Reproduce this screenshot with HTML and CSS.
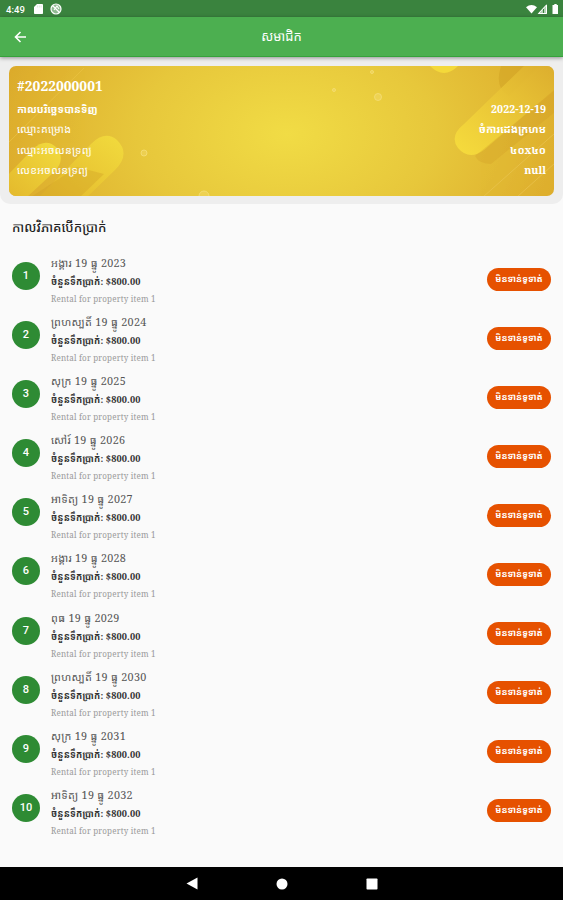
FILE: index.html
```html
<!DOCTYPE html>
<html lang="km">
<head>
<meta charset="utf-8">
<title>សមាជិក</title>
<link rel="stylesheet" href="styles.css">
</head>
<body>
<div class="status">
  <span class="clock">4:49</span>
  <svg class="sd" width="9" height="10" viewBox="0 0 9 10"><path d="M3 0h5.200q.8 0 .8.8v8.400q0 .8-.8.8H.8Q0 10 0 9.200V3z" fill="#fff"/><path d="M3.500 1.500v2M5.300 1.500v2M7.100 1.500v2" stroke="#c9dfca" stroke-width=".6"/></svg>
  <svg class="sync" width="12" height="12" viewBox="0 0 12 12"><circle cx="6" cy="6" r="5" fill="#8fba91" stroke="#fff" stroke-width="1.200"/><path d="M2.500 2.500l7 7M4 7l3-4 2 3" fill="none" stroke="#fff" stroke-width="1.200"/></svg>
  <svg class="signals" width="33" height="12" viewBox="0 0 33 12"><path d="M0 4.200Q5.500 0 11 4.200L5.500 10.500z" fill="#fff"/><path d="M21 1v10H11.500z" fill="#b8d3b9"/><path d="M20.500 2v8.500h-8z" fill="none" stroke="#fff"/><path d="M17.500 6v4" stroke="#3a833e"/><path d="M27 2h1.300V1h2.400v1H32v9h-5.500V2z" fill="#fff"/></svg>
</div>
<header class="appbar">
  <svg class="back" width="13" height="12" viewBox="0 0 13 12"><path d="M12 6H1.500M6.500 1L1.500 6l5 5" fill="none" stroke="#fff" stroke-width="1.600"/></svg>
  <h1>សមាជិក</h1>
</header>
<section class="panel">
  <div class="card">
    <svg class="art" width="546" height="131" viewBox="0 0 546 131">
      <defs>
        <radialGradient id="glow" gradientUnits="userSpaceOnUse" cx="0" cy="0" r="1" gradientTransform="translate(278 68) scale(300 190)"><stop offset="0" stop-color="#f1dc45"/><stop offset=".5" stop-color="#e7c73b"/><stop offset="1" stop-color="#dcaa2b"/></radialGradient>
        <linearGradient id="beam" x1="0" y1="1" x2="1" y2="0"><stop offset="0" stop-color="#e3b72b"/><stop offset="1" stop-color="#f4df3e"/></linearGradient>
        <linearGradient id="beam2" x1="0" y1="1" x2="1" y2="0"><stop offset="0" stop-color="#f8df3d"/><stop offset=".35" stop-color="#efcf39"/><stop offset="1" stop-color="#dcae2e"/></linearGradient>
      </defs>
      <rect width="546" height="131" fill="url(#glow)"/>
      <path d="M-10 118L24 83Q37 71 48 82Q57 94 45 106L18 131H-10z" fill="url(#beam)" opacity=".9"/>
      <path d="M37 124L82 78Q96 64 108 74Q122 88 106 104L78 131H30z" fill="url(#beam)" opacity=".85"/>
      <path d="M22 131l46-30 27 7-24 23z" fill="#cf9d24" opacity=".35"/>
      <path d="M0 76L75 2" stroke="#edc547" opacity=".6"/>
      <path d="M492 0Q485 22 500 30L530 0z" fill="#c9971e" opacity=".35"/>
      <path d="M515 0h31v23L475 84Q460 95 449 82Q440 70 455 58z" fill="url(#beam2)" opacity=".9"/>
      <path d="M546 24L466 90Q470 98 482 98L546 46z" fill="#c99320" opacity=".22"/>
      <path d="M474 131L546 67M508 131L546 97" stroke="#eac451" opacity=".7"/>
      <path d="M421 0h28q-14 14-28 0z" fill="#f4d93a"/>
      <g fill="#f4dc70" fill-opacity=".4" stroke="#f5df79" stroke-opacity=".8"><circle cx="135" cy="87" r="3"/><circle cx="325" cy="24" r="1.500"/><circle cx="363" cy="6" r="1.500"/><circle cx="369" cy="31" r="3.500"/><circle cx="195" cy="130" r="5"/></g>
    </svg>
    <div class="facts">
      <div class="code">#2022000001</div>
      <div class="fact strong"><span>កាលបរិច្ឆេទបានទិញ</span><b>2022-12-19</b></div>
      <div class="fact"><span>ឈ្មោះគម្រោង</span><b>ចំការដេងក្រហម</b></div>
      <div class="fact"><span>ឈ្មោះអចលនទ្រព្យ</span><b>៤០x៤០</b></div>
      <div class="fact"><span>លេខអចលនទ្រព្យ</span><b>null</b></div>
    </div>
  </div>
</section>
<main>
  <h2>កាលវិភាគបើកប្រាក់</h2>
  <ol class="list" id="list">
  </ol>
</main>
<nav class="navbar">
  <svg width="12" height="13" viewBox="0 0 12 13"><path d="M11.500 .5v12L.5 6.500z" fill="#fff"/></svg>
  <svg width="12" height="12" viewBox="0 0 12 12"><circle cx="6" cy="6" r="5.500" fill="#fff"/></svg>
  <svg width="12" height="12" viewBox="0 0 12 12"><rect x=".5" y=".5" width="11" height="11" rx=".8" fill="#fff"/></svg>
</nav>
<script src="app.js"></script>
</body>
</html>
```
FILE: styles.css
```css
* { box-sizing: border-box; }
body {
  margin: 0;
  height: 900px;
  display: flex;
  flex-direction: column;
  overflow: hidden;
  background: #fafafa;
  font-family: "Noto Serif", "DejaVu Serif", "Noto Sans Khmer", serif;
  white-space: nowrap;
}
h1, h2, ol { margin: 0; padding: 0; font-weight: 400; }
svg { display: block; flex: none; }
.status {
  height: 17px;
  padding: 1px 4px 0 6px;
  display: flex;
  align-items: center;
  background: #3a833e;
  color: #fff;
}
.clock { width: 28px; font: 500 9.5px Roboto, sans-serif; letter-spacing: .1px; }
.sync { margin-left: 7px; }
.signals { margin-left: auto; }
.appbar {
  position: relative;
  z-index: 1;
  height: 40px;
  flex: none;
  padding-left: 14px;
  display: flex;
  align-items: center;
  background: #4caf50;
  border-bottom: 1px solid #35a23b;
  box-shadow: 0 1px 4px #0006;
  color: #fff;
}
.appbar h1 { flex: 1; padding-right: 27px; text-align: center; font-size: 13px; line-height: 37px; }
.panel {
  height: 147px;
  flex: none;
  padding: 9px 9px 8px;
  background: #eee;
  border-radius: 0 0 10px 10px;
}
.card { position: relative; height: 130px; border-radius: 7px; overflow: hidden; color: #fff; }
.art { position: absolute; inset: 0; }
.facts { position: relative; padding: 10px 8px 0 8px; }
.code { height: 23px; line-height: 20px; font-size: 13.8px; font-weight: 700; }
.fact { height: 20.4px; display: flex; justify-content: space-between; line-height: 20px; font-size: 10.7px; }
.fact span { letter-spacing: .25px; }
.strong span { font-size: 10.2px; font-weight: 700; letter-spacing: 0; }
main { flex: 1; padding: 0 12px; }
h2 { height: 43px; line-height: 46px; font-size: 13px; color: #222; font-weight: 500; }
.list { list-style: none; }
.row { height: 59.08px; display: flex; align-items: center; }
.num {
  width: 28px;
  height: 28px;
  flex: none;
  margin-top: -1px;
  border-radius: 50%;
  background: #2e8b34;
  color: #fff;
  text-align: center;
  font: 500 11px/28px Roboto, sans-serif;
}
.info { flex: 1; margin-left: 11px; padding-top: 9px; }
.date, .sum, .note { height: 18px; }
.date { line-height: 18px; font-size: 10.8px; letter-spacing: .29px; color: #555; }
.sum { line-height: 20px; font-size: 9.2px; letter-spacing: .12px; font-weight: 700; color: #333; }
.note { line-height: 18px; font-size: 8px; letter-spacing: .2px; color: #999; }
.tag {
  width: 64px;
  height: 23px;
  margin-top: 5px;
  border-radius: 12px;
  background: #e65100;
  color: #fff;
  text-align: center;
  line-height: 22px;
  font-size: 9px;
  font-weight: 700;
}
.navbar {
  height: 33px;
  flex: none;
  display: flex;
  align-items: center;
  justify-content: center;
  gap: 78px;
  background: #000;
}
```
FILE: app.js
```js
const days = ["អង្គារ", "ព្រហស្បតិ៍", "សុក្រ", "សៅរ៍", "អាទិត្យ", "អង្គារ", "ពុធ", "ព្រហស្បតិ៍", "សុក្រ", "អាទិត្យ"];
document.getElementById("list").innerHTML = days.map((day, i) => `
  <li class="row">
    <span class="num">${i + 1}</span>
    <div class="info">
      <div class="date">${day} 19 ធ្នូ ${2023 + i}</div>
      <div class="sum">ចំនួនទឹកប្រាក់: $800.00</div>
      <div class="note">Rental for property item 1</div>
    </div>
    <span class="tag">មិនទាន់ទូទាត់</span>
  </li>`).join("");
```
